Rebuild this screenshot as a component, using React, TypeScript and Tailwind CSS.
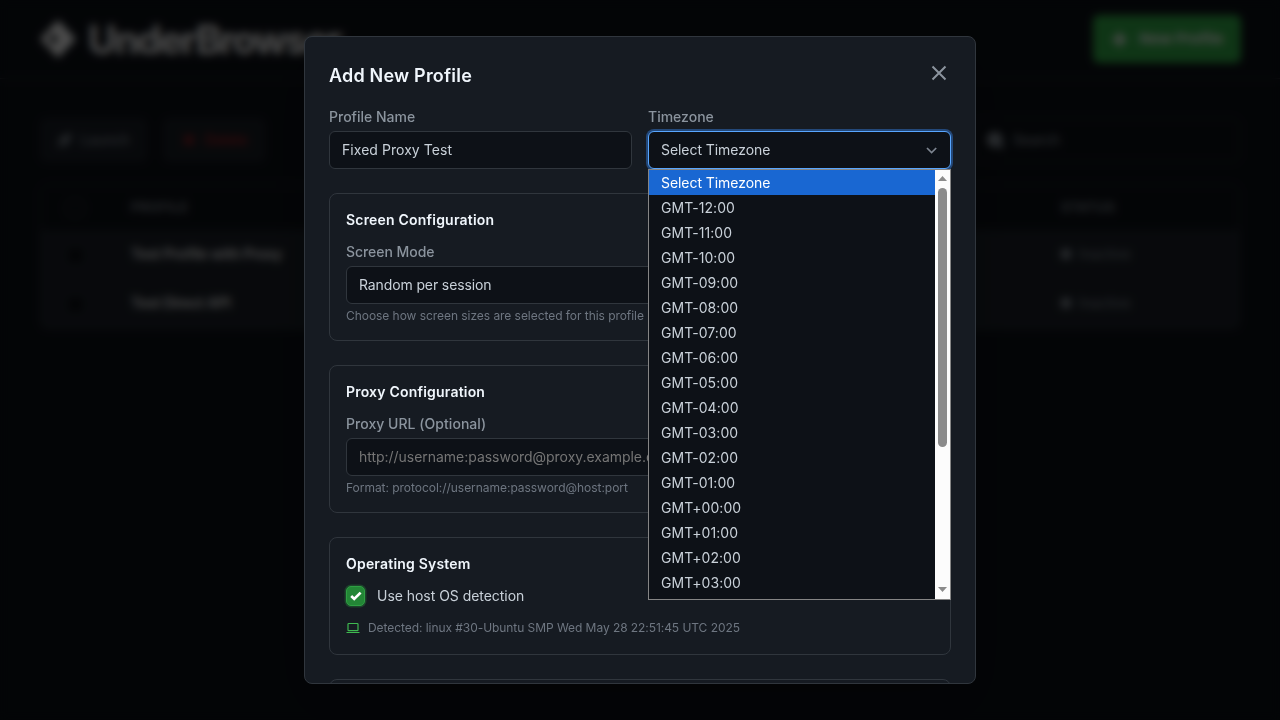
import React from "react";
import { Plus, Rocket, X, Search } from "lucide-react";

const zones = [
  "Select Timezone",
  "GMT-12:00", "GMT-11:00", "GMT-10:00", "GMT-09:00", "GMT-08:00", "GMT-07:00",
  "GMT-06:00", "GMT-05:00", "GMT-04:00", "GMT-03:00", "GMT-02:00", "GMT-01:00",
  "GMT+00:00", "GMT+01:00", "GMT+02:00", "GMT+03:00",
];

const profiles = ["Test Profile with Proxy", "Test Direct API"];

function Dashboard() {
  return (
    <div className="h-full">
      <header className="flex h-[79px] items-center justify-between border-b border-[#30363d] pr-[39px] pl-10">
        <div className="flex items-center gap-3">
          <svg width="36" height="38" viewBox="0 0 36 38" className="block">
            <path
              d="M18 0 36 19 18 38 0 19ZM13.5 13.5 9 19l4.5 5.5L18.5 19Z"
              fill="#ffffff"
              fillRule="evenodd"
            />
          </svg>
          <span className="text-[39px] leading-none font-bold tracking-[-1.9px] text-white">UnderBrowser</span>
        </div>
        <div className="flex h-12 w-[148px] items-center justify-center gap-2.5 rounded-md bg-[#33b24a] text-[15px] font-bold text-white">
          <Plus size={19} strokeWidth={5} />
          New Profile
        </div>
      </header>
      <div className="px-10 pt-[39px]">
        <div className="flex h-11 justify-between">
          <div className="flex gap-4">
            <div className="flex w-[107px] items-center justify-center gap-2 rounded-md border border-[#21262d] bg-[#1a1f27] text-sm font-medium text-[#8b949e]">
              <Rocket size={15} fill="currentColor" />
              Launch
            </div>
            <div className="flex w-[102px] items-center justify-center gap-2 rounded-md border border-[#21262d] bg-[#1a1f27] text-sm font-medium text-[#b62324]">
              <X size={16} strokeWidth={4} />
              Delete
            </div>
          </div>
          <div className="flex w-[267px] items-center gap-2 rounded-md border border-[#30363d] pl-3 text-sm font-medium text-[#8b949e]">
            <Search size={19} strokeWidth={4} fill="currentColor" />
            Search
          </div>
        </div>
        <div className="mt-[22px] overflow-hidden rounded-lg border border-[#30363d] bg-[#1c2129]">
          <div className="flex h-[45px] items-center bg-[#0d1117] text-[13px] font-semibold tracking-[0.6px] text-[#8b949e]">
            <div className="w-[90px] pl-[25px]">
              <div className="size-[18px] rounded-md border border-[#484f58]" />
            </div>
            <span className="w-[930px]">PROFILE</span>
            <span>STATUS</span>
          </div>
          {profiles.map((name) => (
            <div key={name} className="flex h-[49px] items-center border-t border-[#21262d] pb-[3px] text-sm">
              <div className="w-[90px] pl-7">
                <div className="mt-1 size-[13px] rounded-sm bg-[#0a0d12]" />
              </div>
              <span className="w-[930px] font-semibold text-white">{name}</span>
              <span className="flex items-center gap-2 text-[#8b949e]">
                <span className="size-2.5 rounded-[3px] bg-[#8b949e]" />
                Inactive
              </span>
            </div>
          ))}
        </div>
      </div>
    </div>
  );
}

function Field({ label, className = "", children }: { label: string; className?: string; children: React.ReactNode }) {
  return (
    <div className={className}>
      <div className="mb-1 flex h-5 items-center text-sm font-medium text-[#8b949e]">{label}</div>
      {children}
    </div>
  );
}

function Box({ dim = false, className = "", children }: { dim?: boolean; className?: string; children: React.ReactNode }) {
  return (
    <div
      className={
        "flex h-[38px] items-center overflow-hidden rounded-md border border-[#30363d] bg-[#0d1117] px-3 text-sm whitespace-nowrap " +
        (dim ? "text-[#757575] " : "text-[#c9d1d9] ") +
        className
      }
    >
      {children}
    </div>
  );
}

function Section({ title, className = "", children }: { title: string; className?: string; children: React.ReactNode }) {
  return (
    <section className={"shrink-0 rounded-lg border border-[#30363d] p-4 " + className}>
      <h3 className="flex h-5 items-center text-sm font-semibold tracking-[0.2px] text-[#f0f6fc]">{title}</h3>
      {children}
    </section>
  );
}

function TimezoneMenu() {
  return (
    <div className="absolute top-[38px] left-0 z-10 flex h-[431px] w-[303px] border border-[#858585] bg-[#0d1117]">
      <ul className="flex-1 overflow-hidden text-sm text-[#c9d1d9]">
        {zones.map((zone, i) => (
          <li
            key={zone}
            className={"flex h-[25px] items-center pl-3 " + (i === 0 ? "bg-[#1967d2] tracking-[-0.06px] text-white" : "tracking-[0.05px]")}
          >
            {zone}
          </li>
        ))}
      </ul>
      <div className="flex w-[15px] flex-col items-center bg-[#fcfcfc]">
        <svg width="15" height="18" viewBox="0 0 15 18" className="block">
          <path d="M3 11 7.5 6 12 11Z" fill="#8b8b8b" />
        </svg>
        <div className="h-[259px] w-[9px] rounded-full bg-[#8b8b8b]" />
        <svg width="15" height="18" viewBox="0 0 15 18" className="mt-auto block">
          <path d="M3 6 7.5 11 12 6Z" fill="#8b8b8b" />
        </svg>
      </div>
    </div>
  );
}

export default function App() {
  return (
    <div className="relative h-[720px] w-[1280px] overflow-hidden bg-[#0d1117] font-['Inter',sans-serif]">
      <Dashboard />
      <div className="absolute inset-0 flex items-center justify-center bg-black/70 backdrop-blur-[4px]">
        <div className="flex h-[648px] w-[672px] flex-col overflow-hidden rounded-lg border border-[#30363d] bg-[#161b22] px-6 pt-6 shadow-2xl">
          <div className="mb-[18px] flex h-7 shrink-0 items-center justify-between">
            <h2 className="pt-0.5 text-lg font-semibold tracking-[0.2px] text-[#f0f6fc]">Add New Profile</h2>
            <svg width="24" height="24" viewBox="0 0 24 24" className="mb-1 block text-[#8b949e]" fill="none" stroke="currentColor" strokeWidth="2">
              <path d="M5.5 5.5l13 13M18.5 5.5l-13 13" />
            </svg>
          </div>
          <div className="mb-6 grid shrink-0 grid-cols-2 gap-4">
            <Field label="Profile Name">
              <Box className="tracking-[0.05px]">Fixed Proxy Test</Box>
            </Field>
            <Field label="Timezone">
              <div className="relative">
                <div className="flex h-[38px] items-center justify-between rounded-md border border-[#58a6ff] bg-[#0d1117] pr-3 pl-3 text-sm tracking-[-0.06px] text-[#c9d1d9] shadow-[0_0_0_2px_rgba(56,139,253,0.4)]">
                  Select Timezone
                  <svg width="13" height="14" viewBox="0 0 13 14" fill="none" stroke="#7d8590" strokeWidth="1.7" className="block">
                    <path d="M2 5l4.6 4.6L11.2 5" />
                  </svg>
                </div>
                <TimezoneMenu />
              </div>
            </Field>
          </div>
          <div className="flex min-h-0 flex-col gap-6">
            <Section title="Screen Configuration">
              <Field label="Screen Mode" className="mt-3 tracking-[-0.05px]">
                <Box className="tracking-[-0.12px]">Random per session</Box>
              </Field>
              <p className="mt-1 text-xs tracking-[-0.05px] text-[#6e7681]">Choose how screen sizes are selected for this profile</p>
            </Section>
            <Section title="Proxy Configuration">
              <Field label="Proxy URL (Optional)" className="mt-3 tracking-[0.04px]">
                <Box dim className="tracking-[-0.03px]">http://username:password@proxy.example.com:8080</Box>
              </Field>
              <p className="mt-1 text-xs tracking-[-0.035px] text-[#6e7681]">Format: protocol://username:password@host:port</p>
            </Section>
            <Section title="Operating System" className="h-[118px]">
              <div className="mt-3 flex h-5 items-center gap-3 text-sm tracking-[-0.04px] text-[#c9d1d9]">
                <div className="flex h-5 w-[19px] items-center justify-center rounded-[5px] border border-[#2ea043] bg-[#238636] shadow-[0_0_0_1.5px_rgba(46,160,67,0.3)]">
                  <svg width="12" height="12" viewBox="0 0 12 12" fill="none" stroke="white" strokeWidth="2.7" className="block">
                    <path d="M1.2 6l3 2.9L10.6 2.6" />
                  </svg>
                </div>
                Use host OS detection
              </div>
              <div className="mt-3.5 flex h-4 items-center gap-2 text-xs tracking-[-0.06px] text-[#6e7681]">
                <svg width="14" height="12" viewBox="0 0 14 12" fill="none" stroke="#3fb950" className="block">
                  <rect x="2" y="1.5" width="10" height="7.2" rx="0.8" strokeWidth="1.2" />
                  <path d="M0.5 10.5h13" strokeWidth="1.2" />
                </svg>
                Detected: linux #30-Ubuntu SMP Wed May 28 22:51:45 UTC 2025
              </div>
            </Section>
            <div className="h-24 shrink-0 rounded-lg border border-[#30363d]" />
          </div>
        </div>
      </div>
    </div>
  );
}
